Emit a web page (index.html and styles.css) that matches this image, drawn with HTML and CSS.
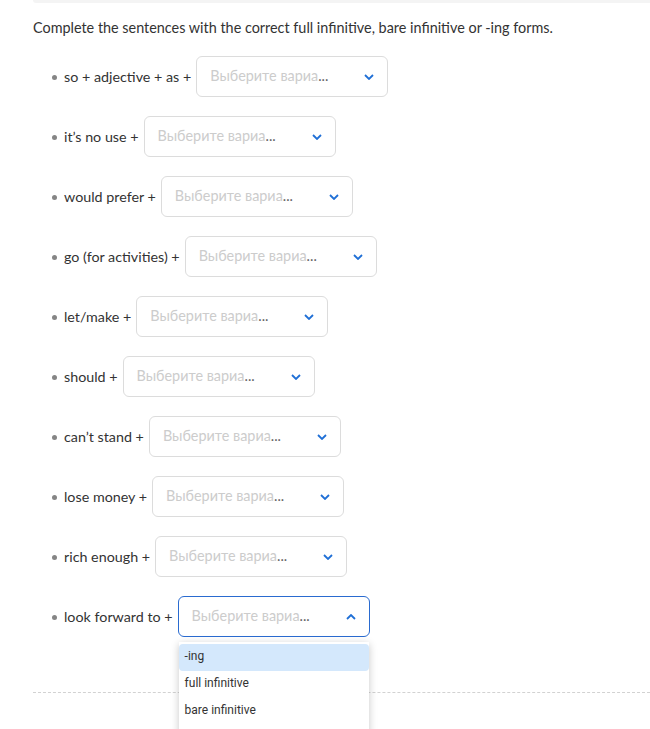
FILE: index.html
```html
<!DOCTYPE html>
<html lang="en">
<head>
<meta charset="UTF-8">
<title>Infinitive or -ing</title>
<link rel="stylesheet" href="styles.css">
</head>
<body>
<div class="prev-card"></div>
<div class="task">
  <p class="task-title">Complete the sentences with the correct full infinitive, bare infinitive or -ing forms.</p>
  <ul class="task-list">
    <li class="task-row"><span class="label">so + adjective + as +</span>
      <div class="picker"><span class="placeholder">Выберите вариа<span class="dots">...</span></span>
        <svg class="chev" width="10" height="6" viewBox="0 0 10 6"><path d="M1 1l4 4 4-4" fill="none" stroke="#1f6fd6" stroke-width="1.8"/></svg></div></li>
    <li class="task-row"><span class="label">it’s no use +</span>
      <div class="picker"><span class="placeholder">Выберите вариа<span class="dots">...</span></span>
        <svg class="chev" width="10" height="6" viewBox="0 0 10 6"><path d="M1 1l4 4 4-4" fill="none" stroke="#1f6fd6" stroke-width="1.8"/></svg></div></li>
    <li class="task-row"><span class="label">would prefer +</span>
      <div class="picker"><span class="placeholder">Выберите вариа<span class="dots">...</span></span>
        <svg class="chev" width="10" height="6" viewBox="0 0 10 6"><path d="M1 1l4 4 4-4" fill="none" stroke="#1f6fd6" stroke-width="1.8"/></svg></div></li>
    <li class="task-row"><span class="label">go (for activities) +</span>
      <div class="picker"><span class="placeholder">Выберите вариа<span class="dots">...</span></span>
        <svg class="chev" width="10" height="6" viewBox="0 0 10 6"><path d="M1 1l4 4 4-4" fill="none" stroke="#1f6fd6" stroke-width="1.8"/></svg></div></li>
    <li class="task-row"><span class="label">let/make +</span>
      <div class="picker"><span class="placeholder">Выберите вариа<span class="dots">...</span></span>
        <svg class="chev" width="10" height="6" viewBox="0 0 10 6"><path d="M1 1l4 4 4-4" fill="none" stroke="#1f6fd6" stroke-width="1.8"/></svg></div></li>
    <li class="task-row"><span class="label">should +</span>
      <div class="picker"><span class="placeholder">Выберите вариа<span class="dots">...</span></span>
        <svg class="chev" width="10" height="6" viewBox="0 0 10 6"><path d="M1 1l4 4 4-4" fill="none" stroke="#1f6fd6" stroke-width="1.8"/></svg></div></li>
    <li class="task-row"><span class="label">can’t stand +</span>
      <div class="picker"><span class="placeholder">Выберите вариа<span class="dots">...</span></span>
        <svg class="chev" width="10" height="6" viewBox="0 0 10 6"><path d="M1 1l4 4 4-4" fill="none" stroke="#1f6fd6" stroke-width="1.8"/></svg></div></li>
    <li class="task-row"><span class="label">lose money +</span>
      <div class="picker"><span class="placeholder">Выберите вариа<span class="dots">...</span></span>
        <svg class="chev" width="10" height="6" viewBox="0 0 10 6"><path d="M1 1l4 4 4-4" fill="none" stroke="#1f6fd6" stroke-width="1.8"/></svg></div></li>
    <li class="task-row"><span class="label">rich enough +</span>
      <div class="picker"><span class="placeholder">Выберите вариа<span class="dots">...</span></span>
        <svg class="chev" width="10" height="6" viewBox="0 0 10 6"><path d="M1 1l4 4 4-4" fill="none" stroke="#1f6fd6" stroke-width="1.8"/></svg></div></li>
    <li class="task-row"><span class="label">look forward to +</span>
      <div class="picker open"><span class="placeholder">Выберите вариа<span class="dots">...</span></span>
        <svg class="chev" width="10" height="6" viewBox="0 0 10 6"><path d="M1 5l4-4 4 4" fill="none" stroke="#1f6fd6" stroke-width="1.8"/></svg>
        <ul class="options">
          <li class="option active">-ing</li>
          <li class="option">full infinitive</li>
          <li class="option">bare infinitive</li>
        </ul>
      </div></li>
  </ul>
  <div class="divider"></div>
</div>
</body>
</html>
```

FILE: styles.css
```css
html, body {
  height: 729px;
}
body {
  margin: 0;
  font-family: Lato, "Open Sans", sans-serif;
  color: #333;
  background: #fff;
  overflow: hidden;
}
.prev-card {
  margin-left: 33px;
  height: 3px;
  background-color: #f4f4f4;
  border-bottom-left-radius: 4px;
}
.task {
  padding-left: 33px;
}
.task-title {
  margin: 15px 0 0;
  font-size: 14.4px;
  line-height: 20px;
}
.task-list {
  list-style: none;
  margin: 18px 0 0;
  padding: 0 0 0 19px;
}
.task-row {
  display: flex;
  align-items: center;
  height: 41px;
  margin-bottom: 19px;
  font-size: 14.3px;
}
.task-row:last-child {
  margin-bottom: 0;
}
.task-row .label::before {
  content: "";
  display: inline-block;
  width: 5px;
  height: 5px;
  border-radius: 50%;
  background-color: #858585;
  margin-right: 7px;
  vertical-align: 2px;
}
.label {
  margin-right: 5px;
}
.picker {
  position: relative;
  box-sizing: border-box;
  width: 192px;
  height: 41px;
  border: 1px solid #dcdcdc;
  border-radius: 6px;
  display: flex;
  align-items: center;
  justify-content: space-between;
  padding: 0 13px 0 13px;
  background: #fff;
}
.picker.open {
  border-color: #2a6bd0;
}
.placeholder {
  color: #cccccc;
  font-size: 14.4px;
  margin-top: -3px;
}
.dots {
  color: #666;
}
.options {
  position: absolute;
  left: 0;
  top: 45px;
  width: 190px;
  margin: 0;
  padding: 2px 0 14px;
  list-style: none;
  background: #fff;
  box-shadow: 0 2px 8px rgba(0, 0, 0, 0.22);
  font-family: Roboto, "Liberation Sans", sans-serif;
  font-size: 12px;
  color: #333;
  z-index: 2;
}
.option {
  height: 27px;
  line-height: 25px;
  padding: 0 6px;
}
.option.active {
  background-color: #d4e8fc;
  border-radius: 4px;
}
.divider {
  margin-top: 55px;
  border-top: 1px dashed #d2d2d2;
}
```
